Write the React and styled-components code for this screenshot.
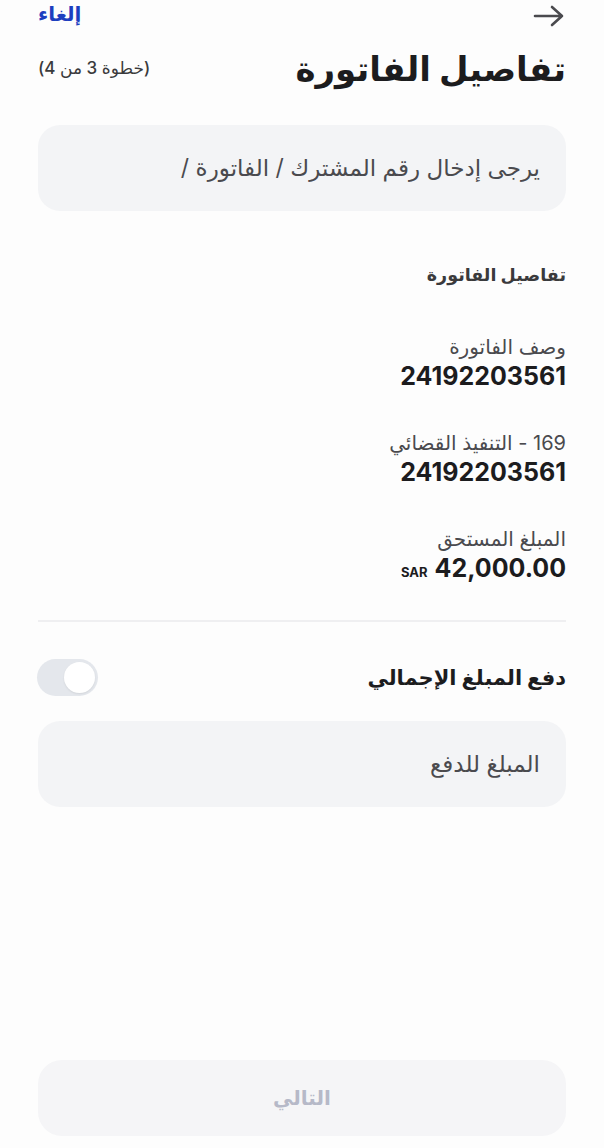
import React from "react";
import styled, { createGlobalStyle } from "styled-components";

const Global = createGlobalStyle`
  html, body { margin: 0; padding: 0; background: #fdfdfd; }
  body { font-family: "Inter", "DejaVu Sans", sans-serif; }
  * { box-sizing: border-box; }
`;

const Page = styled.div`
  direction: rtl;
  width: 604px;
  height: 1148px;
  padding: 0 38px;
  display: flex;
  flex-direction: column;
  background: #fdfdfd;
`;

const TopBar = styled.div`
  height: 32px;
  display: flex;
  align-items: center;
  justify-content: space-between;
`;

const BackButton = styled.button`
  border: 0;
  background: none;
  padding: 0;
  display: flex;
  color: #4a4a4e;
  cursor: pointer;
`;

const CancelLink = styled.span`
  color: #1d3fbf;
  font-size: 20px;
  font-weight: 700;
  margin-top: -4px;
`;

const TitleRow = styled.div`
  display: flex;
  align-items: center;
  justify-content: space-between;
  margin-top: 8px;
  height: 56px;
`;

const Title = styled.h1`
  margin: 0;
  font-size: 34px;
  font-weight: 700;
  color: #1c1c1e;
`;

const Step = styled.span`
  font-size: 17px;
  color: #3a3a3c;
  font-weight: 500;
`;

const InputBox = styled.div`
  height: 86px;
  border-radius: 22px;
  background: #f3f4f6;
  display: flex;
  align-items: center;
  padding: 0 26px;
  margin-top: ${(p) => p.$mt || 0}px;
  font-size: ${(p) => p.$size || 23}px;
  color: #4a4a4e;
`;

const SectionTitle = styled.div`
  margin-top: 53px;
  font-size: 17.5px;
  line-height: 22px;
  font-weight: 700;
  color: #3a3a3c;
`;

const Field = styled.div`
  display: flex;
  flex-direction: column;
  margin-top: ${(p) => p.$mt}px;
`;

const Label = styled.div`
  font-size: 20px;
  color: #4a4a4e;
  line-height: 28px;
`;

const Value = styled.div`
  font-size: 25px;
  font-weight: 700;
  color: #1c1c1e;
  line-height: 30px;
  display: flex;
  align-items: baseline;
  gap: 7px;
`;

const Currency = styled.span`
  font-size: 13px;
  font-weight: 700;
`;

const Divider = styled.hr`
  border: 0;
  height: 2px;
  background: #efeff1;
  margin: 33px 0 0;
`;

const ToggleRow = styled.div`
  display: flex;
  align-items: center;
  justify-content: space-between;
  margin-top: 36px;
  height: 38px;
`;

const ToggleLabel = styled.div`
  font-size: 21px;
  font-weight: 700;
  color: #1c1c1e;
`;

const Track = styled.div`
  width: 61px;
  height: 37px;
  border-radius: 19px;
  background: #e4e7ec;
  display: flex;
  align-items: center;
  padding: 0 3px;
  margin-left: -1px;
`;

const Knob = styled.div`
  width: 31px;
  height: 31px;
  border-radius: 50%;
  background: #fff;
  box-shadow: 0 1px 2px rgba(0, 0, 0, 0.08);
`;

const Spacer = styled.div`
  flex: 1;
`;

const NextButton = styled.button`
  height: 76px;
  border: 0;
  border-radius: 24px;
  background: #f5f5f7;
  color: #b6b9c8;
  font-family: "Inter", "DejaVu Sans", sans-serif;
  font-size: 20px;
  font-weight: 700;
  margin-bottom: 12px;
`;

export default function App() {
  return (
    <>
      <Global />
      <Page>
        <TopBar>
          <BackButton aria-label="back">
            <svg width="34" height="22" viewBox="0 0 34 22" fill="none">
              <path
                d="M3 11H30M20 2L30 11L20 20"
                stroke="currentColor"
                strokeWidth="2.6"
                strokeLinecap="round"
                strokeLinejoin="round"
              />
            </svg>
          </BackButton>
          <CancelLink>إلغاء</CancelLink>
        </TopBar>
        <TitleRow>
          <Title>تفاصيل الفاتورة</Title>
          <Step>(خطوة 3 من 4)</Step>
        </TitleRow>
        <InputBox $mt={29}>يرجى إدخال رقم المشترك / الفاتورة /</InputBox>
        <SectionTitle>تفاصيل الفاتورة</SectionTitle>
        <Field $mt={47}>
          <Label>وصف الفاتورة</Label>
          <Value>24192203561</Value>
        </Field>
        <Field $mt={38}>
          <Label>169 - التنفيذ القضائي</Label>
          <Value>24192203561</Value>
        </Field>
        <Field $mt={38}>
          <Label>المبلغ المستحق</Label>
          <Value>
            42,000.00<Currency>SAR</Currency>
          </Value>
        </Field>
        <Divider />
        <ToggleRow>
          <ToggleLabel>دفع المبلغ الإجمالي</ToggleLabel>
          <Track>
            <Knob />
          </Track>
        </ToggleRow>
        <InputBox $mt={25}>المبلغ للدفع</InputBox>
        <Spacer />
        <NextButton>التالي</NextButton>
      </Page>
    </>
  );
}
